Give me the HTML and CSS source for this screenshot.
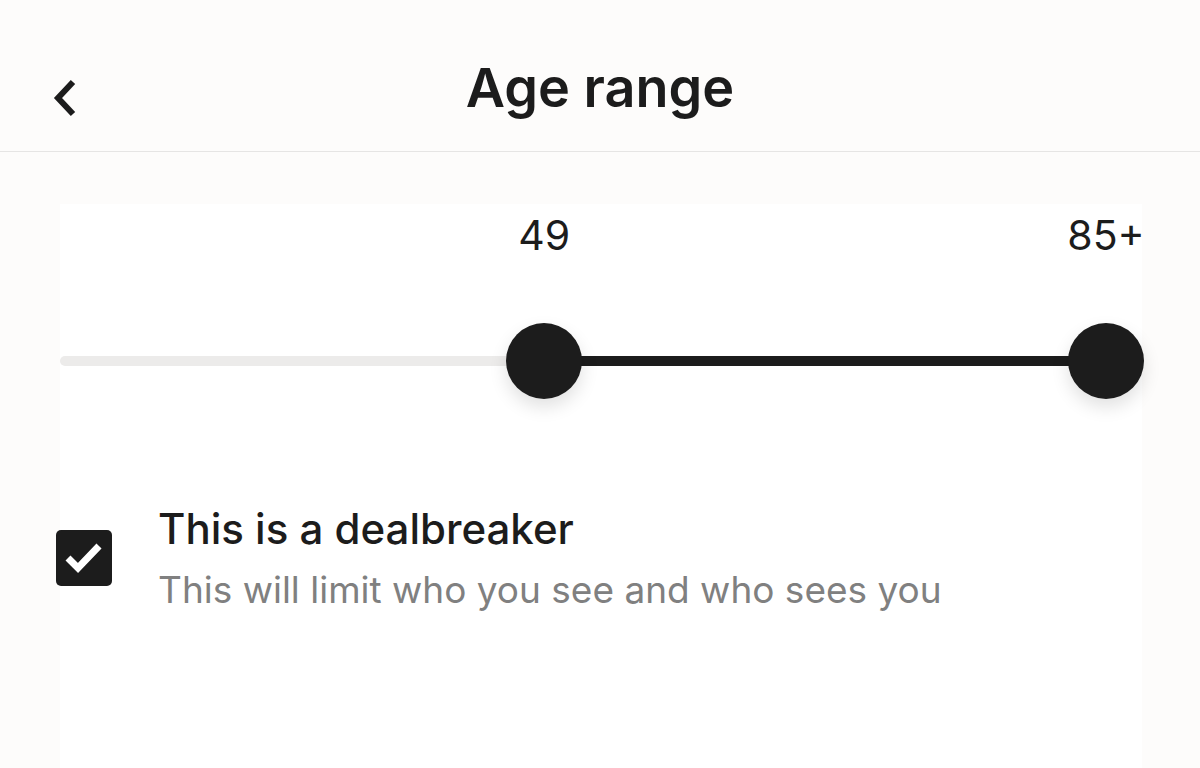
FILE: index.html
```html
<!DOCTYPE html>
<html>
  <head>
    <meta charset="UTF-8" />
    <meta name="viewport" content="width=device-width, initial-scale=1.0" />
    <title>Age range</title>
    <link rel="stylesheet" href="styles.css">
  </head>
  <body>
    <header class="topbar">
      <button class="back" aria-label="Back">
        <svg width="28" height="38" viewBox="0 0 28 38">
          <path d="M23 3 L8 19 L23 35" fill="none" stroke="#1c1c1c" stroke-width="6" stroke-linejoin="miter" />
        </svg>
      </button>
      <h1 class="title">Age range</h1>
    </header>

    <main class="panel">
      <div class="range">
        <div class="labels">
          <span class="label" style="left: 46.3%">49</span>
          <span class="label" style="left: 100%">85+</span>
        </div>
        <div class="track">
          <div class="fill" style="left: 46.3%; right: 0%"></div>
          <div class="thumb" style="left: 46.3%"></div>
          <div class="thumb" style="left: 100%"></div>
        </div>
      </div>

      <label class="option">
        <span class="checkbox">
          <svg width="40" height="34" viewBox="0 0 40 34">
            <path d="M4 17 L14 27 L35 5" fill="none" stroke="#fff" stroke-width="7" />
          </svg>
        </span>
        <span class="option-text">
          <span class="option-title">This is a dealbreaker</span>
          <span class="option-sub">This will limit who you see and who sees you</span>
        </span>
      </label>
    </main>
  </body>
</html>
```

FILE: styles.css
```css
body {
  margin: 0;
  background-color: #fdfcfb;
  font-family: Inter, "Noto Sans", sans-serif;
  color: #1c1c1c;
}

.topbar {
  position: relative;
  height: 151px;
  border-bottom: 1px solid #e6e5e4;
  display: flex;
  align-items: center;
  justify-content: center;
}

.back {
  position: absolute;
  left: 50px;
  top: 79px;
  padding: 0;
  border: none;
  background: none;
  line-height: 0;
}

.title {
  margin: 0;
  margin-top: 24px;
  font-size: 54px;
  font-weight: 600;
}

.panel {
  margin: 52px 58px 0 60px;
  background-color: #ffffff;
  min-height: 570px;
}

.range {
  margin-right: 36px;
  padding-top: 5px;
}

.labels {
  position: relative;
  height: 52px;
}

.label {
  position: absolute;
  top: 0;
  transform: translateX(-50%);
  font-size: 41px;
  line-height: 52px;
}

.track {
  position: relative;
  margin-top: 95px;
  height: 10px;
  border-radius: 5px;
  background-color: #ecebea;
}

.fill {
  position: absolute;
  top: 0;
  bottom: 0;
  background-color: #1c1c1c;
}

.thumb {
  position: absolute;
  top: 50%;
  width: 76px;
  height: 76px;
  border-radius: 50%;
  background-color: #1c1c1c;
  transform: translate(-50%, -50%);
  box-shadow: 0 8px 18px rgba(0, 0, 0, 0.12);
}

.option {
  display: flex;
  align-items: center;
  gap: 46px;
  margin-top: 138px;
  margin-left: -4px;
}

.checkbox {
  display: flex;
  align-items: center;
  justify-content: center;
  width: 56px;
  height: 56px;
  border-radius: 5px;
  background-color: #1c1c1c;
}

.option-text {
  display: flex;
  flex-direction: column;
}

.option-title {
  font-size: 42px;
  font-weight: 500;
  line-height: 50px;
}

.option-sub {
  margin-top: 14px;
  font-size: 37px;
  line-height: 44px;
  color: #808080;
}
```
